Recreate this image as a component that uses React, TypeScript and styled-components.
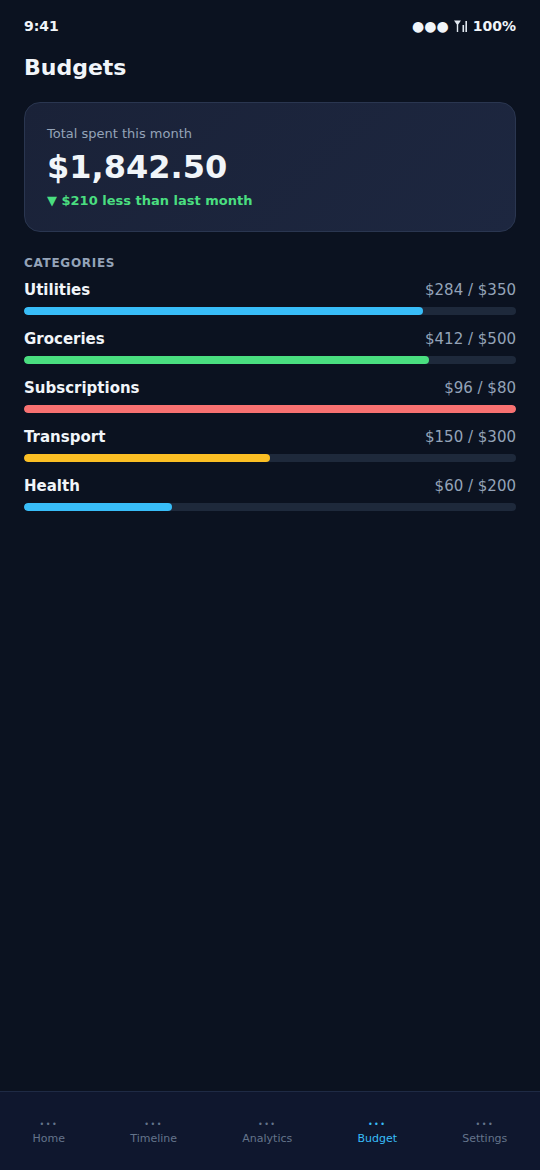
import styled, { createGlobalStyle } from "styled-components";

interface Category {
  name: string;
  spent: number;
  budget: number;
  color: string;
}

const categories: Category[] = [
  { name: "Utilities", spent: 284, budget: 350, color: "#38bdf8" },
  { name: "Groceries", spent: 412, budget: 500, color: "#4ade80" },
  { name: "Subscriptions", spent: 96, budget: 80, color: "#f87171" },
  { name: "Transport", spent: 150, budget: 300, color: "#fbbf24" },
  { name: "Health", spent: 60, budget: 200, color: "#38bdf8" },
];

const tabs = ["Home", "Timeline", "Analytics", "Budget", "Settings"];

function SignalIcon() {
  return (
    <svg width="14" height="12" viewBox="0 0 14 12" fill="#e2e8f0">
      <path d="M0 0.5h7L4.2 4.5V12H2.8V4.5Z" />
      <rect x="8.5" y="5" width="1.6" height="7" />
      <rect x="11.4" y="1" width="1.6" height="11" />
    </svg>
  );
}

export default function App() {
  return (
    <>
      <GlobalStyle />
      <Screen>
        <Main>
          <StatusBar>
            <Time>9:41</Time>
            <StatusRight>
              <span>●●●</span>
              <SignalIcon />
              <span>100%</span>
            </StatusRight>
          </StatusBar>

          <Title>Budgets</Title>

          <SummaryCard>
            <CardLabel>Total spent this month</CardLabel>
            <Amount>$1,842.50</Amount>
            <Delta>▼ $210 less than last month</Delta>
          </SummaryCard>

          <SectionLabel>CATEGORIES</SectionLabel>

          <CategoryList>
            {categories.map((c) => {
              const pct = Math.min(100, (c.spent / c.budget) * 100);
              return (
                <CategoryRow key={c.name}>
                  <RowHead>
                    <CategoryName>{c.name}</CategoryName>
                    <CategoryAmount>
                      ${c.spent} / ${c.budget}
                    </CategoryAmount>
                  </RowHead>
                  <Track>
                    <Fill $color={c.color} style={{ width: `${pct}%` }} />
                  </Track>
                </CategoryRow>
              );
            })}
          </CategoryList>
        </Main>

        <TabBar>
          {tabs.map((t) => (
            <Tab key={t} $active={t === "Budget"}>
              <TabDots>•••</TabDots>
              <span>{t}</span>
            </Tab>
          ))}
        </TabBar>
      </Screen>
    </>
  );
}

const GlobalStyle = createGlobalStyle`
  html, body {
    margin: 0;
    padding: 0;
    background: #0b1220;
    font-family: "DejaVu Sans", "Noto Sans", sans-serif;
    color: #f1f5f9;
  }
  * { box-sizing: border-box; }
`;

const Screen = styled.div`
  width: 540px;
  height: 1170px;
  display: flex;
  flex-direction: column;
  background: #0b1220;
`;

const Main = styled.main`
  flex: 1;
  padding: 0 24px;
  display: flex;
  flex-direction: column;
`;

const StatusBar = styled.div`
  height: 52px;
  display: flex;
  justify-content: space-between;
  align-items: center;
  font-size: 14px;
  font-weight: 700;
  color: #f1f5f9;
`;

const Time = styled.span``;

const StatusRight = styled.span`
  display: flex;
  align-items: center;
  gap: 5px;
`;

const Title = styled.h1`
  margin: 0;
  font-size: 22px;
  font-weight: 700;
  line-height: 32px;
  color: #f1f5f9;
`;

const SummaryCard = styled.section`
  margin-top: 18px;
  height: 130px;
  padding: 22px 22px;
  border-radius: 16px;
  border: 1px solid #2a3650;
  background: linear-gradient(135deg, #1a2238 0%, #1d2740 100%);
`;

const CardLabel = styled.div`
  font-size: 13px;
  line-height: 18px;
  color: #94a3b8;
`;

const Amount = styled.div`
  margin-top: 4px;
  font-size: 32px;
  font-weight: 700;
  line-height: 40px;
  color: #f1f5f9;
`;

const Delta = styled.div`
  margin-top: 5px;
  font-size: 13px;
  font-weight: 700;
  line-height: 18px;
  color: #4ade80;
`;

const SectionLabel = styled.h2`
  margin: 23px 0 0;
  font-size: 12px;
  font-weight: 700;
  letter-spacing: 0.7px;
  line-height: 16px;
  color: #94a3b8;
`;

const CategoryList = styled.div`
  margin-top: 9px;
  display: flex;
  flex-direction: column;
  gap: 14px;
`;

const CategoryRow = styled.div`
  display: flex;
  flex-direction: column;
  gap: 6px;
`;

const RowHead = styled.div`
  display: flex;
  justify-content: space-between;
  align-items: baseline;
  line-height: 21px;
`;

const CategoryName = styled.span`
  font-size: 15px;
  font-weight: 700;
  color: #f1f5f9;
`;

const CategoryAmount = styled.span`
  font-size: 15px;
  color: #94a3b8;
`;

const Track = styled.div`
  height: 8px;
  border-radius: 4px;
  background: #1e293b;
  overflow: hidden;
`;

const Fill = styled.div<{ $color: string }>`
  height: 100%;
  border-radius: 4px;
  background: ${(p) => p.$color};
`;

const TabBar = styled.nav`
  height: 79px;
  padding-top: 3px;
  border-top: 1px solid #1e2a44;
  background: #0f172e;
  display: flex;
  justify-content: space-around;
  align-items: center;
`;

const Tab = styled.div<{ $active: boolean }>`
  display: flex;
  flex-direction: column;
  align-items: center;
  gap: 2px;
  font-size: 11px;
  line-height: 14px;
  color: ${(p) => (p.$active ? "#38bdf8" : "#64748b")};
`;

const TabDots = styled.span`
  font-size: 8px;
  line-height: 10px;
  letter-spacing: 1.5px;
`;
